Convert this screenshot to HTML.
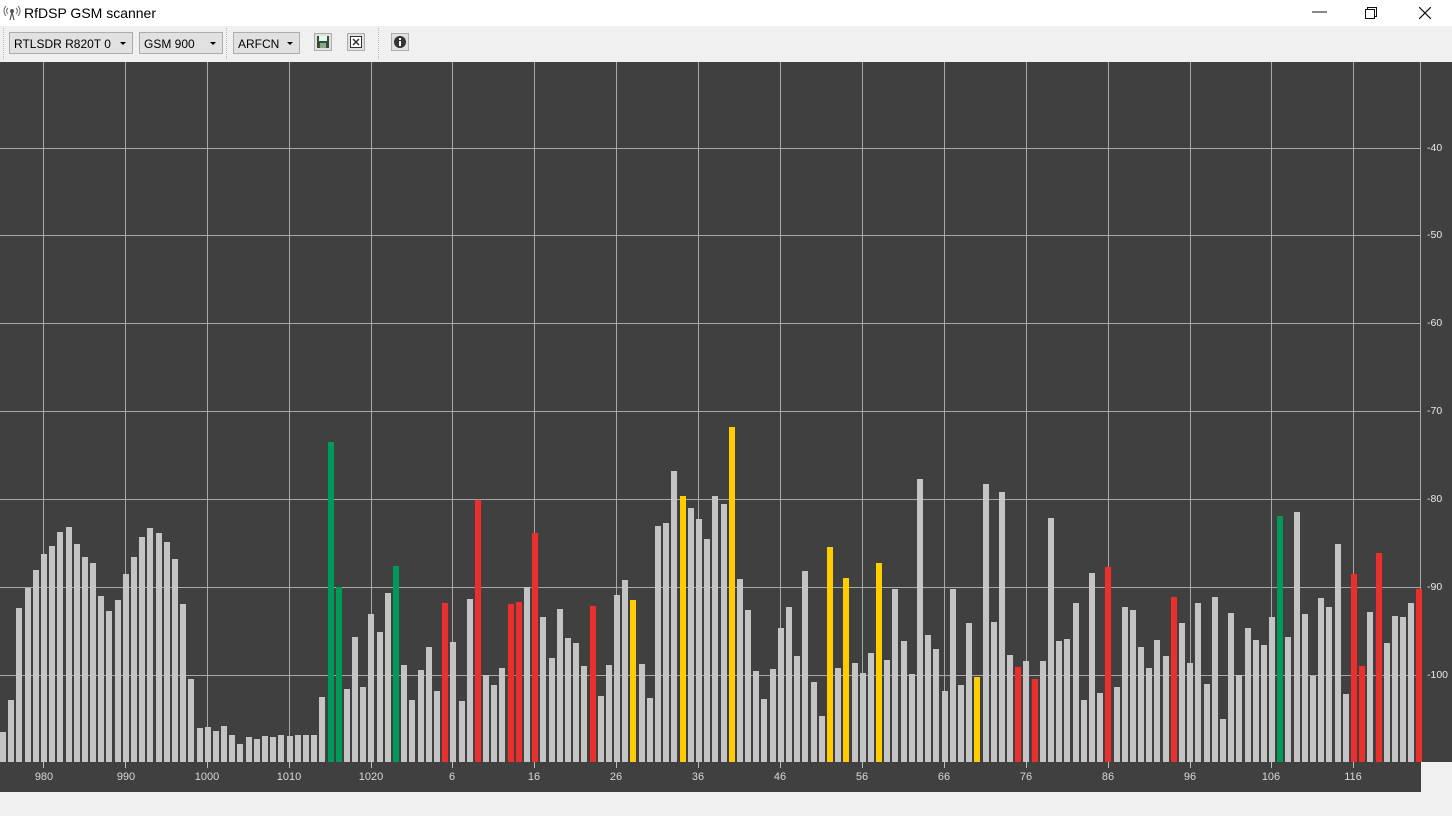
<!DOCTYPE html>
<html><head><meta charset="utf-8">
<style>
*{margin:0;padding:0;box-sizing:border-box}
body{width:1452px;height:816px;background:#f0f0f0;font-family:"Liberation Sans",sans-serif;position:relative;overflow:hidden}
#title{position:absolute;left:0;top:0;width:1452px;height:26px;background:#fff;font-size:14px;color:#000}
#title .t{position:absolute;left:24px;top:5px}
#title .c{position:absolute;top:3px;font-size:15px;color:#111}
#tb{position:absolute;left:0;top:26px;width:1452px;height:35px;background:#f0f0f0}
.combo{position:absolute;top:6px;height:22px;background:#e1e1e1;border:1px solid #adadad;font-size:12px;padding:4px 16px 0 4px;color:#000;white-space:nowrap}
.combo:after{content:"";position:absolute;right:6px;top:9px;border-left:3px solid transparent;border-right:3px solid transparent;border-top:3px solid #000}
.sep{position:absolute;top:2px;height:31px;width:0;border-left:1px dotted #b8b8b8}
.btn{position:absolute;top:7px;width:18px;height:18px}
#plot{position:absolute;left:0;top:62px;width:1452px;height:700px;background:#404040;overflow:hidden}
#xa{position:absolute;left:0;top:762px;width:1421px;height:30px;background:#404040}
.vl{position:absolute;top:0;width:1px;height:700px;background:#a8a8a8}
.hl{position:absolute;left:0;width:1421px;height:1px;background:#a8a8a8}
#bars{position:absolute;left:0;bottom:0;height:700px;display:flex;align-items:flex-end}
#bars i{display:block;flex-shrink:0;width:6px;margin-right:2.19px;background:#c4c4c4;height:10px}
#bars i.r{background:#e8302e;box-shadow:0 0 1px #b02020}
#bars i.y{background:#ffcc00}
#bars i.n{background:#00995c}
.yl{position:absolute;left:1427px;font-size:10.5px;color:#e8e8e8}
.xl{position:absolute;top:9px;font-size:11px;color:#d8d8d8;width:40px;margin-left:-20px;text-align:center}
.tk{position:absolute;top:0;width:1px;height:6px;background:#bbb}
</style></head><body>
<div id="title">
<svg style="position:absolute;left:3px;top:5px" width="18" height="16" viewBox="0 0 18 16"><g fill="none" stroke="#666" stroke-width="1"><path d="M5 3 Q2 6 5 9"/><path d="M3 1 Q-1 6 3 11"/><path d="M13 3 Q16 6 13 9"/><path d="M15 1 Q19 6 15 11"/></g><circle cx="9" cy="6" r="2" fill="#555"/><path d="M9 7 L7 15 M9 7 L11 15" stroke="#555" stroke-width="1.2"/></svg>
<span class="t">RfDSP GSM scanner</span>
<span class="c" style="left:1312px">&#8212;</span>
<svg class="c" style="left:1365px;top:7px" width="12" height="12"><rect x="0.5" y="2.5" width="9" height="9" fill="none" stroke="#111"/><path d="M2.5 2.5V0.5H11.5V9.5H9.5" fill="none" stroke="#111"/></svg>
<svg class="c" style="left:1419px;top:7px" width="12" height="12"><path d="M0 0L12 12M12 0L0 12" stroke="#111" stroke-width="1.2"/></svg>
</div>
<div id="tb">
<div class="sep" style="left:3px"></div>
<div class="combo" style="left:9px;width:124px">RTLSDR R820T 0</div>
<div class="combo" style="left:139px;width:84px">GSM 900</div>
<div class="sep" style="left:226px"></div>
<div class="combo" style="left:233px;width:67px">ARFCN</div>
<svg class="btn" style="left:314px" viewBox="0 0 18 18"><rect x="0.5" y="0.5" width="17" height="17" fill="#e1e1e1" stroke="#adadad"/><rect x="3" y="3" width="12" height="12" fill="#3c4a3c"/><rect x="5" y="3" width="8" height="5" fill="#dfe"/><rect x="6" y="10" width="6" height="5" fill="#8a8"/></svg>
<svg class="btn" style="left:347px" viewBox="0 0 18 18"><rect x="0.5" y="0.5" width="17" height="17" fill="#e1e1e1" stroke="#adadad"/><rect x="3.5" y="3.5" width="11" height="11" fill="#fff" stroke="#333"/><path d="M6 6L12 12M12 6L6 12" stroke="#333" stroke-width="1.5"/></svg>
<div class="sep" style="left:378px"></div>
<svg class="btn" style="left:391px" viewBox="0 0 18 18"><rect x="0.5" y="0.5" width="17" height="17" fill="#e1e1e1" stroke="#adadad"/><circle cx="9" cy="9" r="6" fill="#333"/><rect x="8" y="8" width="2" height="5" fill="#fff"/><rect x="8" y="5" width="2" height="2" fill="#fff"/></svg>
</div>
<div id="plot">
<div class="hl" style="top:86px"></div><div class="hl" style="top:173px"></div><div class="hl" style="top:261px"></div><div class="hl" style="top:349px"></div><div class="hl" style="top:437px"></div><div class="hl" style="top:525px"></div><div class="hl" style="top:613px"></div>
<div class="vl" style="left:43px"></div><div class="vl" style="left:125px"></div><div class="vl" style="left:207px"></div><div class="vl" style="left:289px"></div><div class="vl" style="left:371px"></div><div class="vl" style="left:452px"></div><div class="vl" style="left:534px"></div><div class="vl" style="left:616px"></div><div class="vl" style="left:698px"></div><div class="vl" style="left:780px"></div><div class="vl" style="left:862px"></div><div class="vl" style="left:944px"></div><div class="vl" style="left:1026px"></div><div class="vl" style="left:1108px"></div><div class="vl" style="left:1190px"></div><div class="vl" style="left:1271px"></div><div class="vl" style="left:1353px"></div>
<div style="position:absolute;left:1420px;top:0;width:1px;height:700px;background:#a8a8a8"></div>
<div class="yl" style="top:80px">-40</div><div class="yl" style="top:167px">-50</div><div class="yl" style="top:255px">-60</div><div class="yl" style="top:343px">-70</div><div class="yl" style="top:431px">-80</div><div class="yl" style="top:519px">-90</div><div class="yl" style="top:607px">-100</div>
<div id="bars">
<i style="height:30px"></i><i style="height:62px"></i><i style="height:154px"></i><i style="height:174px"></i><i style="height:192px"></i><i style="height:208px"></i><i style="height:216px"></i><i style="height:230px"></i><i style="height:235px"></i><i style="height:218px"></i>
<i style="height:205px"></i><i style="height:199px"></i><i style="height:166px"></i><i style="height:151px"></i><i style="height:162px"></i><i style="height:188px"></i><i style="height:205px"></i><i style="height:225px"></i><i style="height:234px"></i><i style="height:229px"></i>
<i style="height:220px"></i><i style="height:203px"></i><i style="height:158px"></i><i style="height:83px"></i><i style="height:34px"></i><i style="height:35px"></i><i style="height:31px"></i><i style="height:36px"></i><i style="height:27px"></i><i style="height:18px"></i>
<i style="height:25px"></i><i style="height:23px"></i><i style="height:26px"></i><i style="height:25px"></i><i style="height:27px"></i><i style="height:26px"></i><i style="height:27px"></i><i style="height:27px"></i><i style="height:27px"></i><i style="height:65px"></i>
<i class="n" style="height:320px"></i><i class="n" style="height:175px"></i><i style="height:73px"></i><i style="height:125px"></i><i style="height:75px"></i><i style="height:148px"></i><i style="height:130px"></i><i style="height:169px"></i><i class="n" style="height:196px"></i>
<i style="height:97px"></i><i style="height:62px"></i><i style="height:92px"></i><i style="height:115px"></i><i style="height:71px"></i><i class="r" style="height:159px"></i><i style="height:120px"></i><i style="height:61px"></i><i style="height:163px"></i><i class="r" style="height:262px"></i>
<i style="height:87px"></i><i style="height:77px"></i><i style="height:94px"></i><i class="r" style="height:158px"></i><i class="r" style="height:160px"></i><i style="height:175px"></i><i class="r" style="height:229px"></i><i style="height:145px"></i><i style="height:104px"></i><i style="height:153px"></i>
<i style="height:124px"></i><i style="height:119px"></i><i style="height:96px"></i><i class="r" style="height:156px"></i><i style="height:66px"></i><i style="height:97px"></i><i style="height:167px"></i><i style="height:182px"></i><i class="y" style="height:162px"></i><i style="height:98px"></i>
<i style="height:64px"></i><i style="height:236px"></i><i style="height:239px"></i><i style="height:291px"></i><i class="y" style="height:266px"></i><i style="height:254px"></i><i style="height:243px"></i><i style="height:223px"></i><i style="height:266px"></i><i style="height:258px"></i>
<i class="y" style="height:335px"></i><i style="height:183px"></i><i style="height:152px"></i><i style="height:91px"></i><i style="height:63px"></i><i style="height:93px"></i><i style="height:134px"></i><i style="height:155px"></i><i style="height:106px"></i><i style="height:191px"></i>
<i style="height:80px"></i><i style="height:46px"></i><i class="y" style="height:215px"></i><i style="height:94px"></i><i class="y" style="height:184px"></i><i style="height:99px"></i><i style="height:89px"></i><i style="height:109px"></i><i class="y" style="height:199px"></i><i style="height:102px"></i>
<i style="height:173px"></i><i style="height:121px"></i><i style="height:88px"></i><i style="height:283px"></i><i style="height:127px"></i><i style="height:113px"></i><i style="height:71px"></i><i style="height:173px"></i><i style="height:77px"></i><i style="height:139px"></i>
<i class="y" style="height:85px"></i><i style="height:278px"></i><i style="height:140px"></i><i style="height:270px"></i><i style="height:107px"></i><i class="r" style="height:95px"></i><i style="height:101px"></i><i class="r" style="height:83px"></i><i style="height:101px"></i><i style="height:244px"></i>
<i style="height:121px"></i><i style="height:123px"></i><i style="height:159px"></i><i style="height:62px"></i><i style="height:189px"></i><i style="height:69px"></i><i class="r" style="height:195px"></i><i style="height:75px"></i><i style="height:155px"></i><i style="height:152px"></i>
<i style="height:115px"></i><i style="height:94px"></i><i style="height:122px"></i><i style="height:106px"></i><i class="r" style="height:165px"></i><i style="height:139px"></i><i style="height:99px"></i><i style="height:159px"></i><i style="height:78px"></i><i style="height:165px"></i>
<i style="height:43px"></i><i style="height:149px"></i><i style="height:87px"></i><i style="height:134px"></i><i style="height:122px"></i><i style="height:117px"></i><i style="height:145px"></i><i class="n" style="height:246px"></i><i style="height:125px"></i><i style="height:250px"></i>
<i style="height:148px"></i><i style="height:86px"></i><i style="height:164px"></i><i style="height:155px"></i><i style="height:218px"></i><i style="height:68px"></i><i class="r" style="height:188px"></i><i class="r" style="height:96px"></i><i style="height:150px"></i><i class="r" style="height:209px"></i>
<i style="height:119px"></i><i style="height:146px"></i><i style="height:145px"></i><i style="height:159px"></i><i class="r" style="height:173px"></i>
</div>
</div>
<div id="xa">
<div class="tk" style="left:43px"></div><div class="tk" style="left:125px"></div><div class="tk" style="left:207px"></div><div class="tk" style="left:289px"></div><div class="tk" style="left:371px"></div><div class="tk" style="left:452px"></div><div class="tk" style="left:534px"></div><div class="tk" style="left:616px"></div><div class="tk" style="left:698px"></div><div class="tk" style="left:780px"></div><div class="tk" style="left:862px"></div><div class="tk" style="left:944px"></div><div class="tk" style="left:1026px"></div><div class="tk" style="left:1108px"></div><div class="tk" style="left:1190px"></div><div class="tk" style="left:1271px"></div><div class="tk" style="left:1353px"></div>
<div class="xl" style="left:44px">980</div><div class="xl" style="left:126px">990</div><div class="xl" style="left:207px">1000</div><div class="xl" style="left:289px">1010</div><div class="xl" style="left:371px">1020</div><div class="xl" style="left:452px">6</div><div class="xl" style="left:534px">16</div><div class="xl" style="left:616px">26</div><div class="xl" style="left:698px">36</div><div class="xl" style="left:780px">46</div><div class="xl" style="left:862px">56</div><div class="xl" style="left:944px">66</div><div class="xl" style="left:1026px">76</div><div class="xl" style="left:1108px">86</div><div class="xl" style="left:1190px">96</div><div class="xl" style="left:1271px">106</div><div class="xl" style="left:1353px">116</div>
</div>
</body></html>
